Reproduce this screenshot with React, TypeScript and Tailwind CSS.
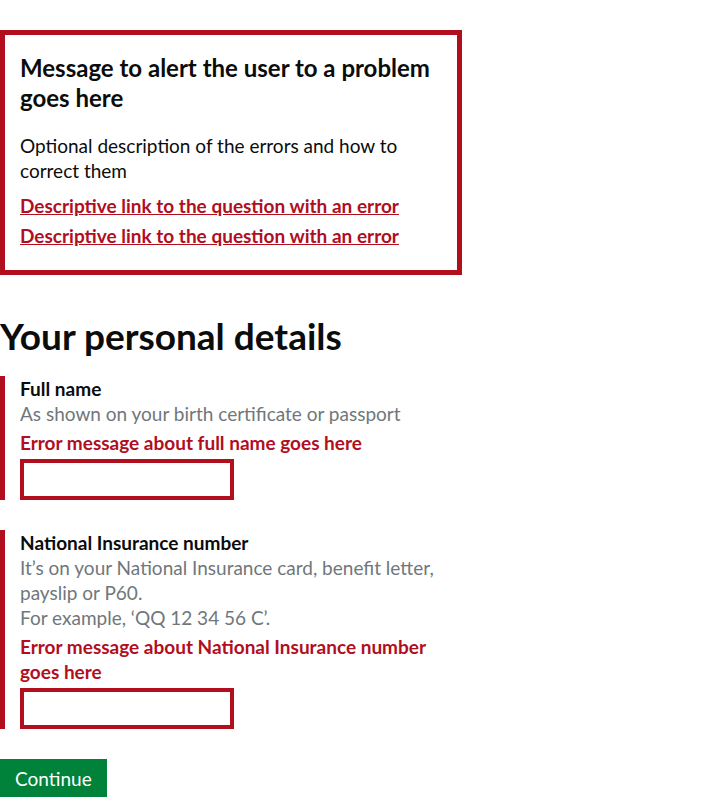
export default function App() {
  return (
    <div className="min-h-screen bg-white pt-[30px] text-[#0b0c0c] [font-family:Lato,Arial,sans-serif]">
      {/* error summary */}
      <div className="w-[462px] border-[5px] border-[#b10e1e] px-[15px] pt-[18px] pb-[22px]">
        <h2 className="text-[24px] leading-[30px] font-bold">
          Message to alert the user to a problem goes here
        </h2>
        <p className="mt-[20px] text-[19px] leading-[25px]">
          Optional description of the errors and how to correct them
        </p>
        <ul className="mt-[10px]">
          <li className="text-[19px] leading-[25px]">
            <a href="#full-name" className="font-bold text-[#b10e1e] underline">
              Descriptive link to the question with an error
            </a>
          </li>
          <li className="mt-[5px] text-[19px] leading-[25px]">
            <a href="#ni-number" className="font-bold text-[#b10e1e] underline">
              Descriptive link to the question with an error
            </a>
          </li>
        </ul>
      </div>

      <h1 className="mt-[41px] text-[37px] leading-[40px] font-bold">Your personal details</h1>

      <div className="mt-[20px] flex flex-col gap-[30px]">
        <div className="w-[462px] border-l-[5px] border-[#b10e1e] pl-[15px]">
          <label htmlFor="full-name" className="block text-[19px] leading-[25px] font-bold">
            Full name
          </label>
          <p className="mb-[4px] text-[19px] leading-[25px] text-[#6f777b]">
            As shown on your birth certificate or passport
          </p>
          <p className="mb-[4px] text-[19px] leading-[25px] font-bold text-[#b10e1e]">
            Error message about full name goes here
          </p>
          <input id="full-name" className="block h-[41px] w-[214px] border-4 border-[#b10e1e] px-2 outline-none" />
        </div>

        <div className="w-[462px] border-l-[5px] border-[#b10e1e] pl-[15px]">
          <label htmlFor="ni-number" className="block text-[19px] leading-[25px] font-bold">
            National Insurance number
          </label>
          <p className="mb-[4px] text-[19px] leading-[25px] text-[#6f777b]">
            It’s on your National Insurance card, benefit letter, payslip or P60.
            <br />
            For example, ‘QQ 12 34 56 C’.
          </p>
          <p className="mb-[4px] text-[19px] leading-[25px] font-bold text-[#b10e1e]">
            Error message about National Insurance number goes here
          </p>
          <input id="ni-number" className="block h-[41px] w-[214px] border-4 border-[#b10e1e] px-2 outline-none" />
        </div>
      </div>

      <button className="mt-[30px] h-[38px] bg-[#00823b] px-[15px] text-[19px] leading-[25px] text-white shadow-[0_2px_0_#003618]">
        Continue
      </button>
    </div>
  );
}
